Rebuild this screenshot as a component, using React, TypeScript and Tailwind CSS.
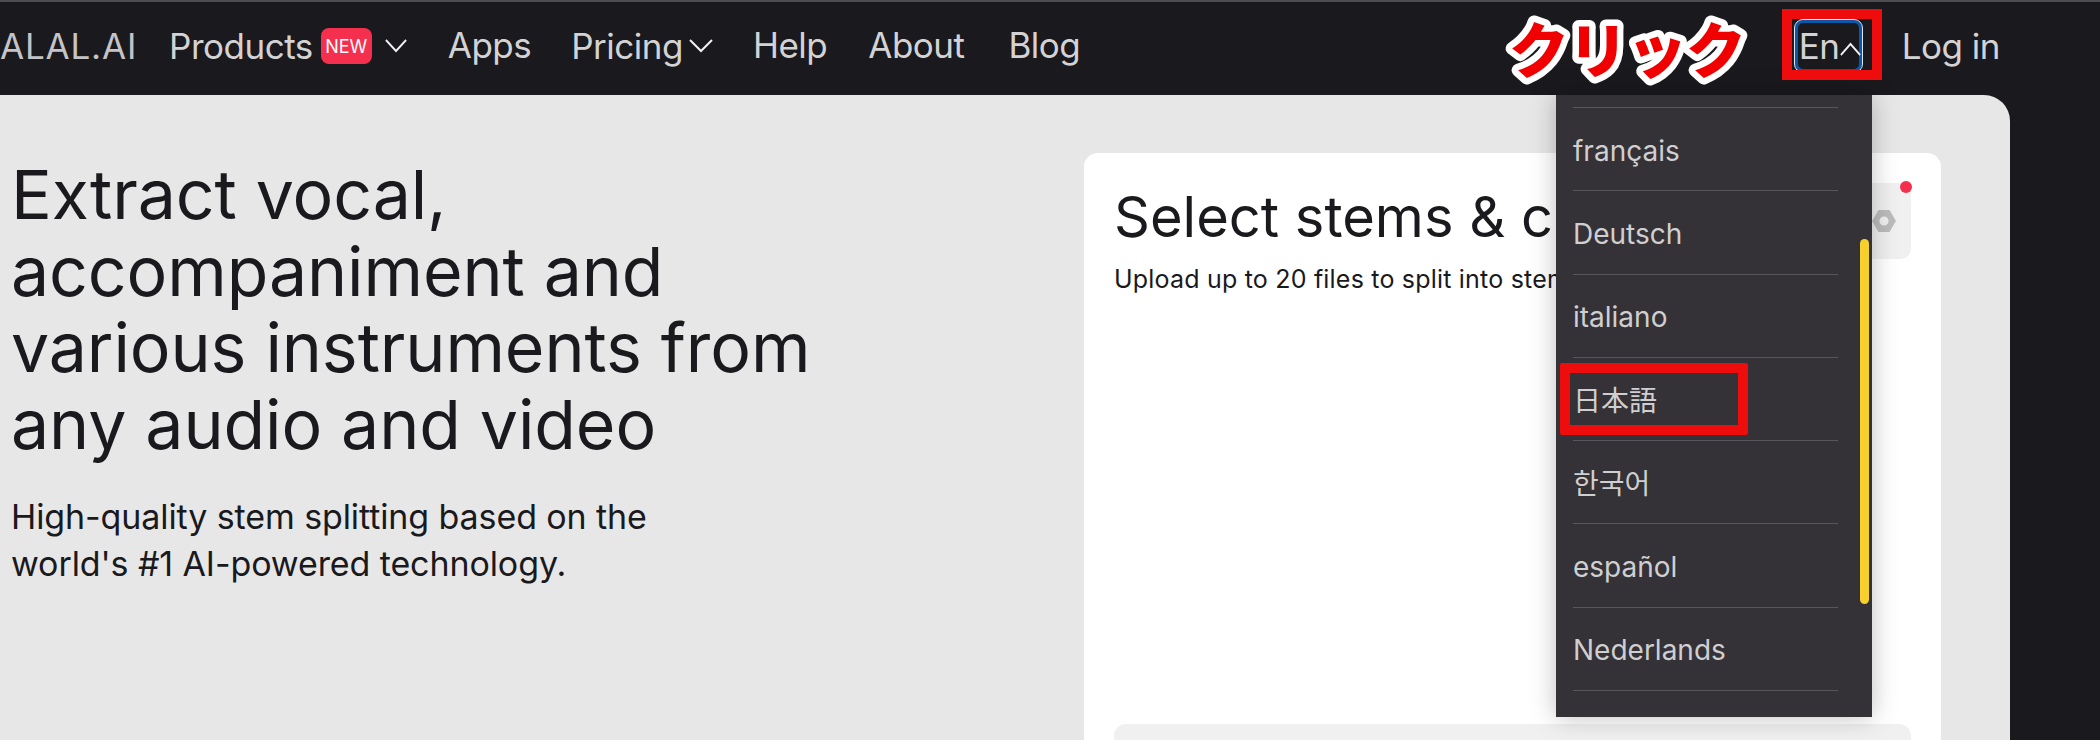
const LANGUAGES = ["français", "Deutsch", "italiano", "日本語", "한국어", "español", "Nederlands"];

function Chevron({ up, width, className }: { up?: boolean; width: number; className?: string }) {
  return (
    <svg className={className} width={width} height="14" viewBox="0 0 24 14" preserveAspectRatio="none" fill="none">
      <path d={up ? "M1 13 12 2l11 11" : "M1 1l11 11L23 1"} stroke="#f2f2f2" strokeWidth="2" />
    </svg>
  );
}

function NavLink({ label }: { label: string }) {
  return <a className="text-[35px] leading-none text-[#d3d3d6] tracking-[-0.5px]">{label}</a>;
}

function Nav() {
  return (
    <header className="flex h-[93px] items-center justify-between pb-[5px] pr-[100px]">
      <div className="flex items-center">
        <span className="text-[35px] leading-none text-[#c4c4c8] tracking-[0.8px]">ALAL.AI</span>
        <div className="ml-[32px] flex items-center">
          <NavLink label="Products" />
          <span className="ml-[8px] flex h-[36px] w-[51px] items-center justify-center rounded-[8px] bg-[#f5304f] text-[18px] text-white">
            NEW
          </span>
          <Chevron className="ml-[13px]" width={22} />
        </div>
        <div className="ml-[41px]">
          <NavLink label="Apps" />
        </div>
        <div className="ml-[40px] flex items-center">
          <NavLink label="Pricing" />
          <Chevron className="ml-[6px]" width={24} />
        </div>
        <div className="ml-[40px]">
          <NavLink label="Help" />
        </div>
        <div className="ml-[41px]">
          <NavLink label="About" />
        </div>
        <div className="ml-[44px]">
          <NavLink label="Blog" />
        </div>
      </div>
      <div className="flex items-center">
        <button className="flex h-[52px] w-[67px] items-center rounded-[8px] border-[3px] border-[#0e56a8] pl-[1px] outline outline-[1.5px] outline-[#dfe8f5] text-[35px] leading-none text-[#d3d3d6] tracking-[-0.5px]">
          En
          <Chevron up className="ml-[1px] mt-[6px] shrink-0" width={21} />
        </button>
        <a className="ml-[40px] text-[35px] leading-none text-[#d3d3d6] tracking-[-0.5px]">Log in</a>
      </div>
    </header>
  );
}

function Hero() {
  return (
    <section className="w-[1084px] shrink-0 pl-[11px] pt-[61px]">
      <h1 className="text-[68px] font-normal leading-[76.5px] tracking-[-0.1px] text-[#1a191d]">
        Extract vocal,
        <br />
        accompaniment and
        <br />
        various instruments from
        <br />
        any audio and video
      </h1>
      <p className="mt-[31px] text-[34px] leading-[47px] tracking-[-0.1px] text-[#1a191d]">
        High-quality stem splitting based on the
        <br />
        world's #1 AI-powered technology.
      </p>
    </section>
  );
}

function Card() {
  return (
    <section className="mt-[58px] flex h-[700px] w-[857px] shrink-0 flex-col rounded-[14px] bg-white px-[30px] pt-[30px]">
      <div className="flex items-start justify-between">
        <div>
          <h2 className="text-[56px] font-normal leading-[68px] text-[#1a191d] whitespace-nowrap">Select stems &amp; c</h2>
          <p className="mt-[13px] text-[25px] leading-[30px] tracking-[0.2px] text-[#1a191d] whitespace-nowrap">
            Upload up to 20 files to split into stems
          </p>
        </div>
        <div className="relative flex h-[76px] w-[76px] items-center justify-end rounded-[10px] bg-[#f0f0f0] pr-[15px]">
          <span className="absolute right-[-1px] top-[-2px] h-[12px] w-[12px] rounded-full bg-[#f5304f]" />
          <svg width="24" height="22" viewBox="0 0 26 24">
            <path
              fillRule="evenodd"
              d="M7 0h12l7 12-7 12H7L0 12zM13 7a5 5 0 1 0 0 10 5 5 0 0 0 0-10z"
              fill="#bcbcbc"
            />
          </svg>
        </div>
      </div>
      <div className="mt-[430px] h-[60px] shrink-0 rounded-[12px] bg-[#f0f0f0]" />
    </section>
  );
}

function LanguageMenu() {
  return (
    <div className="absolute left-[1556px] top-[95px] h-[622px] w-[316px] bg-[#343236] shadow-[0_0_24px_rgba(0,0,0,0.25)]">
      <div className="ml-[17px] mt-[12px] w-[265px] border-t border-[#58565a]" />
      {LANGUAGES.map((lang) => (
        <div
          key={lang}
          className="ml-[17px] flex h-[83.3px] w-[265px] items-center border-b border-[#58565a] pt-[3px] text-[28px] leading-none text-[#cfcfd2] font-['Inter','Noto_Sans_CJK_JP',sans-serif]"
        >
          {lang}
        </div>
      ))}
      <div className="absolute left-[304px] top-[144px] h-[365px] w-[9px] rounded-full bg-[#f7d02e]" />
    </div>
  );
}

function Annotations() {
  return (
    <>
      <svg className="absolute left-[1490px] top-0" width="270" height="95">
        <text
          x="19"
          y="73"
          fontSize="60"
          fontWeight="900"
          fill="#f00000"
          stroke="#ffffff"
          strokeWidth="13"
          strokeLinejoin="round"
          paintOrder="stroke"
          letterSpacing="-1"
          fontFamily="'Noto Sans CJK JP', sans-serif"
        >
          クリック
        </text>
      </svg>
      <div className="absolute left-[1782px] top-[9px] h-[71px] w-[100px] border-x-[10px] border-y-[10px] border-[#ee0c0c]" />
      <div className="absolute left-[1560px] top-[363px] h-[72px] w-[188px] rounded-[2px] border-[10px] border-[#ee0c0c]" />
    </>
  );
}

export default function App() {
  return (
    <div className="relative h-[740px] w-[2100px] overflow-hidden bg-[#1a191d] font-['Inter','Liberation_Sans',sans-serif]">
      <div className="h-[2px] bg-[#4d4d50]" />
      <Nav />
      <main className="flex h-[645px] w-[2010px] overflow-hidden rounded-tr-[26px] bg-[#e7e7e7]">
        <Hero />
        <Card />
      </main>
      <LanguageMenu />
      <Annotations />
    </div>
  );
}
